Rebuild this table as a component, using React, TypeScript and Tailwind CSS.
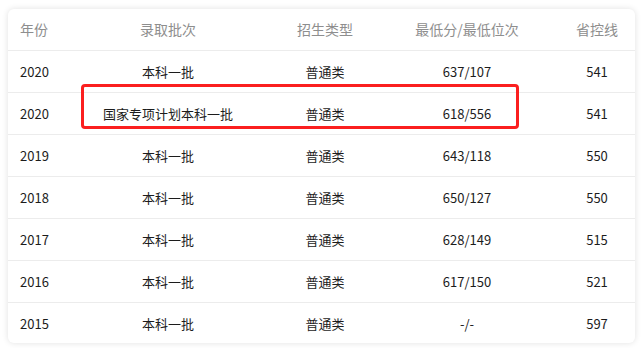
const rows = [
  { year: "2020", batch: "本科一批", type: "普通类", score: "637/107", line: "541" },
  { year: "2020", batch: "国家专项计划本科一批", type: "普通类", score: "618/556", line: "541" },
  { year: "2019", batch: "本科一批", type: "普通类", score: "643/118", line: "550" },
  { year: "2018", batch: "本科一批", type: "普通类", score: "650/127", line: "550" },
  { year: "2017", batch: "本科一批", type: "普通类", score: "628/149", line: "515" },
  { year: "2016", batch: "本科一批", type: "普通类", score: "617/150", line: "521" },
  { year: "2015", batch: "本科一批", type: "普通类", score: "-/-", line: "597" },
];

const cols = "grid grid-cols-[92px_136px_178px_106px_115px] items-center";

const App = () => {
  return (
    <div className="w-[642px] h-[348px] bg-white pt-[9px] pl-[8px] font-['Noto_Sans_CJK_SC','Noto_Sans',sans-serif]">
      <div className="relative w-[627px] h-[334px] bg-white rounded-md shadow-[0_0_6px_rgba(0,0,0,0.12)] overflow-hidden">
        {/* header */}
        <div className={`${cols} h-[42px] border-b border-[#ececec] text-[#8e8e8e] text-[14px]`}>
          <div className="pl-[12px]">年份</div>
          <div className="text-center">录取批次</div>
          <div className="text-center">招生类型</div>
          <div className="text-center">最低分/最低位次</div>
          <div className="text-center pl-[39px]">省控线</div>
        </div>

        {rows.map((r, i) => (
          <div
            key={i}
            className={`${cols} h-[42px] text-[#1c1c1c] text-[13px] ${i < rows.length - 1 ? "border-b border-[#ececec]" : ""}`}
          >
            <div className="pl-[12px]">{r.year}</div>
            <div className="text-center whitespace-nowrap">{r.batch}</div>
            <div className="text-center">{r.type}</div>
            <div className="text-center">{r.score}</div>
            <div className="text-center pl-[39px]">{r.line}</div>
          </div>
        ))}

        {/* highlight box */}
        <div className="absolute left-[73px] top-[75px] w-[438px] h-[45px] border-[3px] border-[#fb1f1f] rounded-[4px]"></div>
      </div>
    </div>
  );
};

export default App;
